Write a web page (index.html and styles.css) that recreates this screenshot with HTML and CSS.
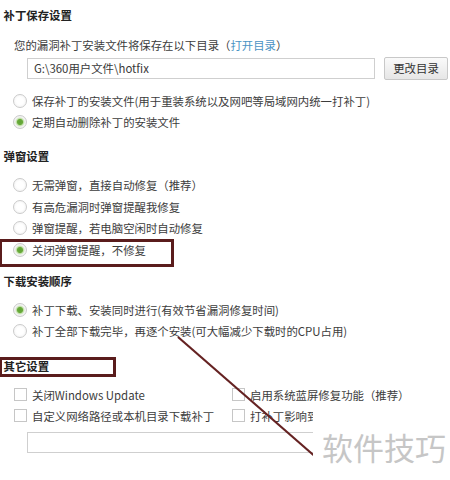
FILE: index.html
```html
<!DOCTYPE html>
<html lang="zh-CN">
<head>
<meta charset="utf-8">
<title>补丁设置</title>
<link rel="stylesheet" href="styles.css">
</head>
<body>
<div class="page">
  <div class="title t1">补丁保存设置</div>
  <div class="desc">您的漏洞补丁安装文件将保存在以下目录（<span class="link">打开目录</span>）</div>
  <div class="path-row">
    <div class="input">G:\360用户文件\hotfix</div>
    <div class="btn">更改目录</div>
  </div>
  <div class="radios r1">
    <div class="radio"><span class="dot"></span>保存补丁的安装文件(用于重装系统以及网吧等局域网内统一打补丁)</div>
    <div class="radio"><span class="dot on"></span>定期自动删除补丁的安装文件</div>
  </div>

  <div class="title t2">弹窗设置</div>
  <div class="radios r2">
    <div class="radio"><span class="dot"></span>无需弹窗，直接自动修复（推荐）</div>
    <div class="radio"><span class="dot"></span>有高危漏洞时弹窗提醒我修复</div>
    <div class="radio"><span class="dot"></span>弹窗提醒，若电脑空闲时自动修复</div>
    <div class="radio"><span class="dot on"></span>关闭弹窗提醒，不修复</div>
  </div>

  <div class="title t3">下载安装顺序</div>
  <div class="radios r3">
    <div class="radio"><span class="dot on"></span>补丁下载、安装同时进行(有效节省漏洞修复时间)</div>
    <div class="radio"><span class="dot"></span>补丁全部下载完毕，再逐个安装(可大幅减少下载时的CPU占用)</div>
  </div>

  <div class="title t4">其它设置</div>
  <div class="checks">
    <div class="check"><span class="box"></span>关闭Windows Update</div>
    <div class="check"><span class="box"></span>启用系统蓝屏修复功能（推荐）</div>
    <div class="check"><span class="box"></span>自定义网络路径或本机目录下载补丁</div>
    <div class="check"><span class="box"></span>打补丁影响到游戏、输入法时不修复</div>
  </div>
  <div class="input input2"></div>

  <div class="mark mark1"></div>
  <div class="mark mark2"></div>
  <svg class="arrow" width="450" height="480" viewBox="0 0 450 480">
    <line x1="178" y1="337" x2="318" y2="459" stroke="#652222" stroke-width="2.2"/>
  </svg>
  <div class="watermark">软件技巧</div>
</div>
</body>
</html>
```

FILE: styles.css
```css
html, body {
  margin: 0;
  padding: 0;
  background: #ffffff;
}
.page {
  position: relative;
  width: 450px;
  height: 480px;
  overflow: hidden;
  font-family: "Noto Sans CJK SC", "Noto Sans", sans-serif;
  font-size: 11.4px;
  color: #3c3c3c;
}
.title {
  font-weight: bold;
  color: #222;
  line-height: 20px;
  height: 20px;
  padding-left: 3.5px;
}
.t1 { padding-top: 5px; }
.t2 { margin-top: 13.5px; }
.t3 { margin-top: 10.25px; }
.t4 { margin-top: 13.75px; }
.desc {
  margin-top: 10px;
  line-height: 20px;
  height: 20px;
  padding-left: 14px;
}
.link { color: #4a93c4; }
.path-row {
  margin-top: 2px;
  height: 23px;
  display: flex;
  align-items: center;
  padding-left: 27px;
  gap: 9px;
}
.input {
  box-sizing: border-box;
  width: 348px;
  height: 21px;
  border: 1px solid #cfcfcf;
  background: #fff;
  line-height: 19px;
  padding-left: 6px;
  color: #3a3a3a;
}
.btn {
  box-sizing: border-box;
  width: 64px;
  height: 23px;
  border: 1px solid #c8c8c8;
  border-radius: 2px;
  background: linear-gradient(#fafafa, #e6e6e6);
  text-align: center;
  line-height: 21px;
  color: #333;
}
.radios { padding-left: 13px; }
.r1 { margin-top: 10.5px; }
.r1 .radio { height: 21px; }
.r2, .r3 { margin-top: 8.25px; }
.radio {
  display: flex;
  align-items: center;
  height: 21.5px;
  gap: 5px;
  white-space: nowrap;
}
.dot {
  box-sizing: border-box;
  width: 14px;
  height: 14px;
  flex: none;
  border-radius: 50%;
  border: 1px solid #cbcbcb;
  background: radial-gradient(circle, #ffffff 40%, #eeeeee 100%);
}
.dot.on {
  background: radial-gradient(circle, #5fa135 0, #6aac3c 2.6px, #c6e1b0 3.6px, #f4f4f4 5px, #ececec 100%);
}
.checks {
  margin-top: 8.5px;
  padding-left: 14px;
  display: grid;
  grid-template-columns: 218px 1fr;
  grid-auto-rows: 21px;
}
.check {
  display: flex;
  align-items: center;
  gap: 5px;
  white-space: nowrap;
}
.box {
  box-sizing: border-box;
  width: 13px;
  height: 13px;
  flex: none;
  border: 1px solid #c6c6c6;
  background: #fff;
}
.input2 {
  margin-top: 5.5px;
  margin-left: 27px;
}
.mark {
  position: absolute;
  box-sizing: border-box;
  border: 3px solid #5a1c1c;
  left: -1px;
}
.mark1 { top: 238.5px; width: 175px; height: 28px; }
.mark2 { top: 356.5px; width: 117px; height: 20px; }
.arrow {
  position: absolute;
  left: 0;
  top: 0;
}
.watermark {
  position: absolute;
  left: 313px;
  top: 411px;
  width: 137px;
  height: 69px;
  background: #fff;
  color: #c6c6c6;
  font-size: 31px;
  line-height: 31px;
  padding-top: 20px;
  padding-left: 9px;
  box-sizing: border-box;
  white-space: nowrap;
}
```
